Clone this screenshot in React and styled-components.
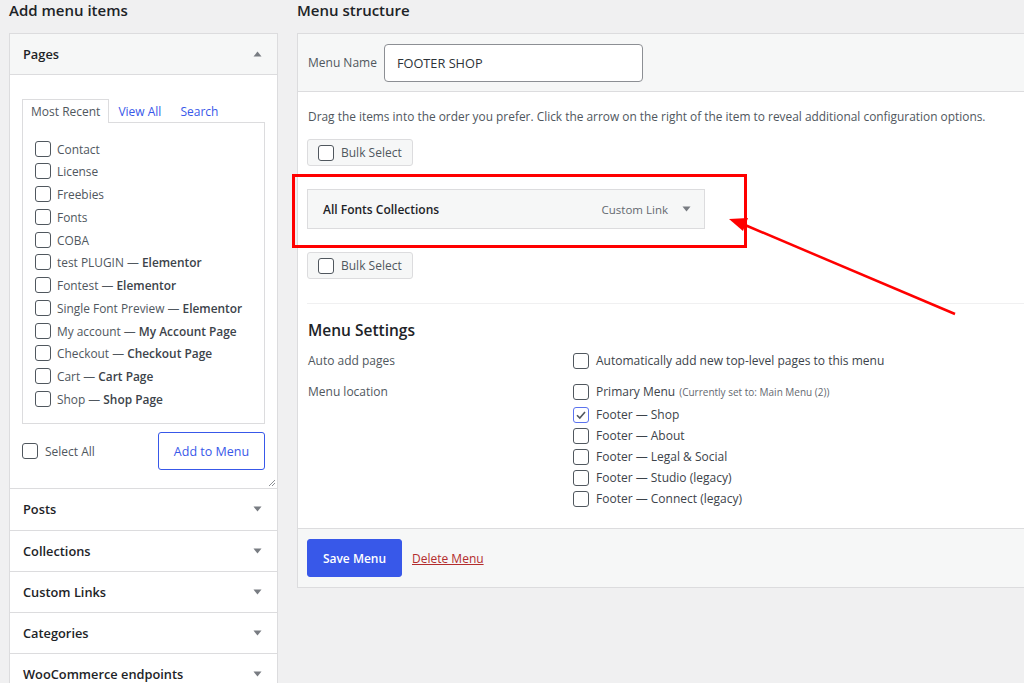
import React from "react";
import styled, { createGlobalStyle } from "styled-components";

const GlobalStyle = createGlobalStyle`
  html, body {
    margin: 0;
    padding: 0;
    background: #f0f0f1;
    overflow: hidden;
  }
  body {
    font-family: "Open Sans", "Noto Sans", sans-serif;
    font-size: 12px;
    color: #3c434a;
  }
`;

const pages = [
  ["Contact"],
  ["License"],
  ["Freebies"],
  ["Fonts"],
  ["COBA"],
  ["test PLUGIN", "Elementor"],
  ["Fontest", "Elementor"],
  ["Single Font Preview", "Elementor"],
  ["My account", "My Account Page"],
  ["Checkout", "Checkout Page"],
  ["Cart", "Cart Page"],
  ["Shop", "Shop Page"],
];

const sections = ["Posts", "Collections", "Custom Links", "Categories", "WooCommerce endpoints"];

const locations = [
  { label: "Primary Menu", note: "(Currently set to: Main Menu (2))" },
  { label: "Footer — Shop", checked: true },
  { label: "Footer — About" },
  { label: "Footer — Legal & Social" },
  { label: "Footer — Studio (legacy)" },
  { label: "Footer — Connect (legacy)" },
];

function Check({ checked }) {
  return (
    <Box $checked={checked}>
      {checked && (
        <svg width="12" height="12" viewBox="0 0 12 12">
          <path d="M2 6.2 L4.8 9 L10 3" fill="none" stroke="#50575e" strokeWidth="1.6" />
        </svg>
      )}
    </Box>
  );
}

function Arrow({ up }) {
  return (
    <svg width="9" height="6" viewBox="0 0 9 6">
      <path d={up ? "M0.5 5.5 L4.5 0.5 L8.5 5.5 Z" : "M0.5 0.5 L4.5 5.5 L8.5 0.5 Z"} fill="#787c82" />
    </svg>
  );
}

export default function App() {
  return (
    <>
      <GlobalStyle />
      <Page>
        <LeftCol>
          <Heading>Add menu items</Heading>
          <Accordion>
            <SectionHead $open>
              Pages
              <Arrow up />
            </SectionHead>
            <PagesBody>
              <Tabs>
                <Tab $active>Most Recent</Tab>
                <Tab>View All</Tab>
                <Tab>Search</Tab>
              </Tabs>
              <ListBox>
                {pages.map(([name, type]) => (
                  <ListItem key={name}>
                    <Check />
                    <span>
                      {name}
                      {type && (
                        <>
                          {" — "}
                          <Strong>{type}</Strong>
                        </>
                      )}
                    </span>
                  </ListItem>
                ))}
              </ListBox>
              <ActionRow>
                <SelectAll>
                  <Check />
                  Select All
                </SelectAll>
                <OutlineButton>Add to Menu</OutlineButton>
              </ActionRow>
              <Grip>
                <svg width="8" height="8" viewBox="0 0 8 8">
                  <path d="M7 1 L1 7 M7 4 L4 7" stroke="#8c8f94" strokeWidth="1" />
                </svg>
              </Grip>
            </PagesBody>
            {sections.map((s) => (
              <SectionHead key={s}>
                {s}
                <Arrow />
              </SectionHead>
            ))}
          </Accordion>
        </LeftCol>

        <RightCol>
          <Heading>Menu structure</Heading>
          <Panel>
            <PanelHead>
              <Label>Menu Name</Label>
              <NameInput defaultValue="FOOTER SHOP" />
            </PanelHead>
            <PanelBody>
              <Hint>
                Drag the items into the order you prefer. Click the arrow on the right of the item to reveal additional configuration options.
              </Hint>
              <BulkButton>
                <Check />
                Bulk Select
              </BulkButton>
              <Highlight>
                <MenuItem>
                  <ItemTitle>All Fonts Collections</ItemTitle>
                  <ItemMeta>
                    Custom Link
                    <Arrow />
                  </ItemMeta>
                </MenuItem>
              </Highlight>
              <BulkButton>
                <Check />
                Bulk Select
              </BulkButton>
              <Settings>
                <SettingsTitle>Menu Settings</SettingsTitle>
                <SettingsGrid>
                  <SettingLabel>Auto add pages</SettingLabel>
                  <Options>
                    <Option>
                      <Check />
                      Automatically add new top-level pages to this menu
                    </Option>
                  </Options>
                  <SettingLabel>Menu location</SettingLabel>
                  <Options>
                    {locations.map((l, i) => (
                      <Option key={l.label} $first={i === 0}>
                        <Check checked={l.checked} />
                        {l.label}
                        {l.note && <Note>{l.note}</Note>}
                      </Option>
                    ))}
                  </Options>
                </SettingsGrid>
              </Settings>
            </PanelBody>
            <PanelFoot>
              <PrimaryButton>Save Menu</PrimaryButton>
              <DeleteLink>Delete Menu</DeleteLink>
            </PanelFoot>
          </Panel>
        </RightCol>

        <Annotation width="1024" height="683" viewBox="0 0 1024 683">
          <line x1="955" y1="314" x2="745" y2="225" stroke="#f00" strokeWidth="2.5" />
          <path d="M729 219 L748 218 L743 231 Z" fill="#f00" />
        </Annotation>
      </Page>
    </>
  );
}

const Page = styled.div`
  position: relative;
  display: flex;
  gap: 19px;
  padding-left: 9px;
  width: 1100px;
  height: 683px;
`;

const LeftCol = styled.div`
  width: 269px;
  flex-shrink: 0;
`;

const RightCol = styled.div`
  width: 760px;
  flex-shrink: 0;
`;

const Heading = styled.h2`
  margin: 0 0 13px;
  font-size: 15px;
  line-height: 20px;
  font-weight: 600;
  color: #1d2327;
`;

const Accordion = styled.div`
  background: #fff;
  border: 1px solid #dcdcde;
`;

const SectionHead = styled.div`
  display: flex;
  align-items: center;
  justify-content: space-between;
  height: 40.25px;
  padding: 0 15px 0 13px;
  font-size: 12.8px;
  font-weight: 600;
  color: #1d2327;
  background: ${(p) => (p.$open ? "#f6f7f7" : "#fff")};
  border-bottom: 1px solid #dcdcde;
  &:last-child {
    border-bottom: none;
  }
`;

const PagesBody = styled.div`
  position: relative;
  padding: 23px 12px 18px;
  border-bottom: 1px solid #dcdcde;
`;

const Tabs = styled.div`
  display: flex;
  align-items: flex-end;
  height: 24px;
`;

const Tab = styled.span`
  height: 23px;
  line-height: 23px;
  padding: ${(p) => (p.$active ? "0 8px" : "0 9px 0 8px")};
  font-size: 12px;
  color: ${(p) => (p.$active ? "#50575e" : "#3858e9")};
  background: ${(p) => (p.$active ? "#fff" : "transparent")};
  border: 1px solid ${(p) => (p.$active ? "#dcdcde" : "transparent")};
  border-bottom: none;
  position: relative;
  top: 1px;
`;

const ListBox = styled.div`
  border: 1px solid #dcdcde;
  padding: 14px 12px 12px;
  height: 274px;
`;

const ListItem = styled.label`
  display: flex;
  align-items: center;
  gap: 6px;
  height: 22.75px;
  font-size: 11.9px;
  color: #50575e;
  white-space: nowrap;
`;

const Strong = styled.b`
  font-weight: 600;
  color: #3c434a;
`;

const Box = styled.span`
  display: inline-flex;
  align-items: center;
  justify-content: center;
  width: 16px;
  height: 16px;
  box-sizing: border-box;
  flex-shrink: 0;
  border: 1px solid ${(p) => (p.$checked ? "#5b73ee" : "#50575e")};
  border-radius: 3px;
  background: #fff;
`;

const ActionRow = styled.div`
  display: flex;
  align-items: center;
  justify-content: space-between;
  margin-top: 8px;
`;

const SelectAll = styled.label`
  display: flex;
  align-items: center;
  gap: 7px;
  font-size: 12px;
  color: #50575e;
`;

const OutlineButton = styled.button`
  width: 107px;
  height: 38px;
  font-family: inherit;
  font-size: 12.5px;
  color: #3858e9;
  background: #fff;
  border: 1px solid #3858e9;
  border-radius: 3px;
`;

const Grip = styled.span`
  position: absolute;
  right: 1px;
  bottom: 1px;
  display: flex;
`;

const Panel = styled.div`
  background: #fff;
  border: 1px solid #dcdcde;
`;

const PanelHead = styled.div`
  display: flex;
  align-items: center;
  gap: 7px;
  height: 57px;
  padding: 0 10px;
  background: #f6f7f7;
  border-bottom: 1px solid #dcdcde;
`;

const Label = styled.span`
  font-size: 12px;
  color: #50575e;
`;

const NameInput = styled.input`
  width: 259px;
  height: 38px;
  box-sizing: border-box;
  padding: 0 12px;
  font-family: inherit;
  font-size: 12.75px;
  color: #2c3338;
  border: 1px solid #8c8f94;
  border-radius: 4px;
  outline: none;
`;

const PanelBody = styled.div`
  padding: 15px 0 0 9px;
`;

const Hint = styled.p`
  margin: 0 0 14px 1px;
  font-size: 11.9px;
  line-height: 18px;
  color: #50575e;
  white-space: nowrap;
`;

const BulkButton = styled.div`
  display: inline-flex;
  align-items: center;
  gap: 7px;
  height: 27px;
  box-sizing: border-box;
  padding: 0 10px;
  font-size: 12px;
  color: #50575e;
  background: #f6f7f7;
  border: 1px solid #dcdcde;
  border-radius: 3px;
`;

const Highlight = styled.div`
  width: 437px;
  margin: 8px 0 4px -15px;
  padding: 12px 0 16px 12px;
  border: 3px solid #f00;
`;

const MenuItem = styled.div`
  display: flex;
  align-items: center;
  justify-content: space-between;
  width: 398px;
  height: 40px;
  box-sizing: border-box;
  padding: 0 13px 0 15px;
  background: #f6f7f7;
  border: 1px solid #dcdcde;
`;

const ItemTitle = styled.span`
  font-size: 12px;
  font-weight: 600;
  color: #1d2327;
`;

const ItemMeta = styled.span`
  display: flex;
  align-items: center;
  gap: 14px;
  font-size: 11.5px;
  color: #646970;
`;

const Settings = styled.div`
  margin-top: 24px;
  padding-top: 14px;
  border-top: 1px solid #f0f0f1;
`;

const SettingsTitle = styled.h3`
  margin: 0 0 8px 1px;
  font-size: 15.5px;
  line-height: 24px;
  font-weight: 600;
  color: #1d2327;
`;

const SettingsGrid = styled.div`
  display: grid;
  grid-template-columns: 266px 1fr;
  row-gap: 10px;
  padding-bottom: 19px;
`;

const SettingLabel = styled.div`
  margin-left: 1px;
  font-size: 12px;
  line-height: 21px;
  color: #50575e;
`;

const Options = styled.div`
  display: flex;
  flex-direction: column;
`;

const Option = styled.label`
  display: flex;
  align-items: center;
  gap: 7px;
  height: 21px;
  margin-bottom: ${(p) => (p.$first ? "2px" : "0")};
  font-size: 12px;
  color: #3c434a;
  white-space: nowrap;
`;

const Note = styled.span`
  margin-left: -3px;
  font-size: 10px;
  color: #646970;
`;

const PanelFoot = styled.div`
  display: flex;
  align-items: center;
  gap: 10px;
  height: 58px;
  padding: 0 9px;
  background: #f6f7f7;
  border-top: 1px solid #dcdcde;
`;

const PrimaryButton = styled.button`
  width: 95px;
  height: 38px;
  font-family: inherit;
  font-size: 12px;
  font-weight: 600;
  color: #fff;
  background: #3858e9;
  border: 1px solid #3858e9;
  border-radius: 3px;
`;

const DeleteLink = styled.a`
  font-size: 12px;
  color: #b32d2e;
  text-decoration: underline;
`;

const Annotation = styled.svg`
  position: absolute;
  left: 0;
  top: 0;
  pointer-events: none;
`;
